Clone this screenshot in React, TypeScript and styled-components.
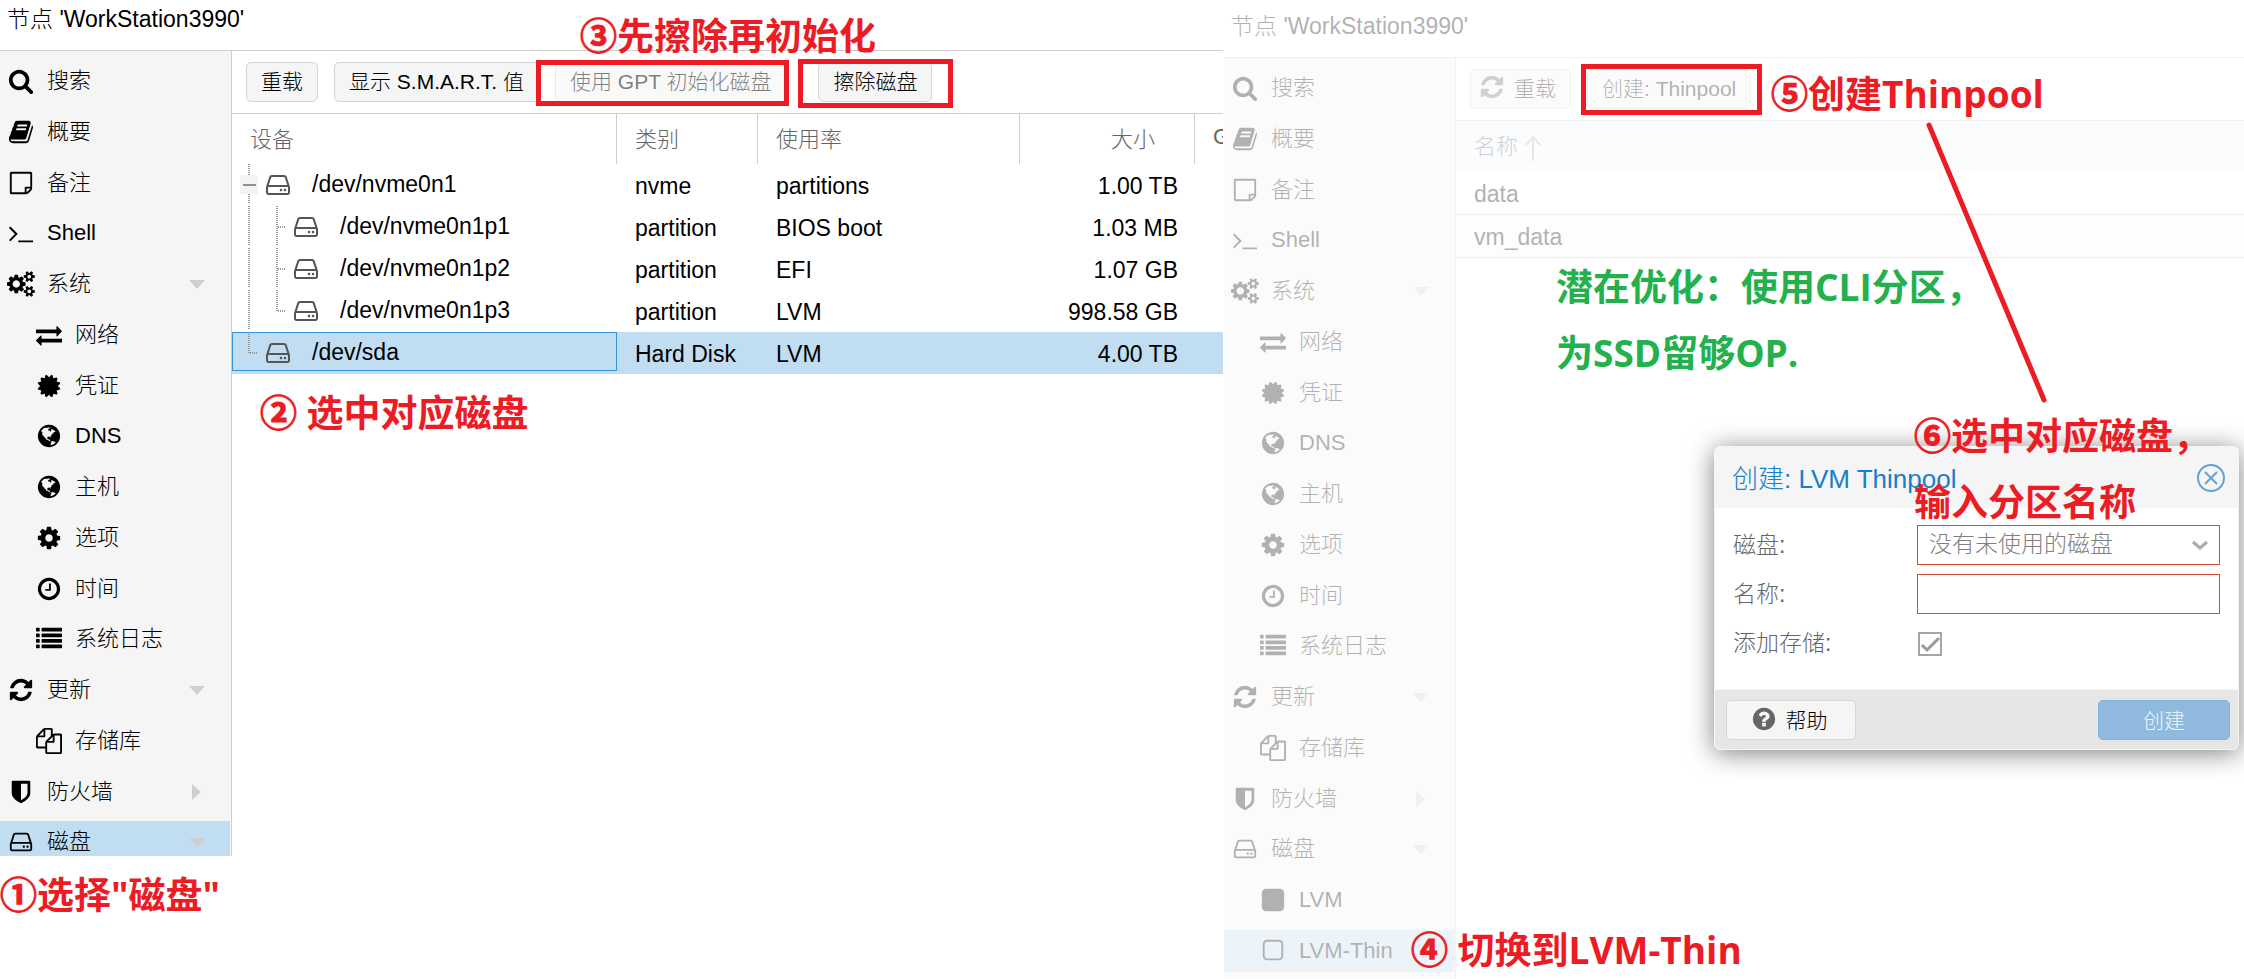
import React from 'react';
import styled, { createGlobalStyle, css } from 'styled-components';

const GlobalStyle = createGlobalStyle`
  *, *::before, *::after { box-sizing: border-box; }
  html, body { margin: 0; background: #fff; }
  body {
    font-family: 'Liberation Sans', 'Noto Sans CJK SC', sans-serif;
    font-weight: 300;
    font-size: 22px;
    color: #000;
  }
  button, input, select { font: inherit; color: inherit; margin: 0; }
`;

/* ---------- icons ---------- */

const globePath =
  'M896 128q209 0 385.5 103t279.5 279.5 103 385.5-103 385.5-279.5 279.5-385.5 103-385.5-103-279.5-279.5-103-385.5 103-385.5 279.5-279.5 385.5-103zm274 521q-2 1-9.5 9.5t-13.5 9.5q2 0 4.5-5t5-11 3.5-7q6-7 22-15 14-6 52-12 34-8 51 11-2-2 9.5-13t14.5-12q3-2 15-4.5t15-7.5l2-22q-12 1-17.5-7t-6.5-21q0 2-6 8 0-7-4.5-8t-11.5 1-9 1q-10-3-15-7.5t-8-16.5-4-15q-2-5-9.5-11t-9.5-10q-1-2-2.5-5.5t-3-6.5-4-5.5-5.5-2.5-7 5-7.5 10-4.5 5q-3-2-6-1.5t-4.5 1-4.5 3-5 3.5q-3 2-8.5 3t-8.5 2q15-5-1-11-10-4-16-3 9-4 7.5-12t-8.5-14h5q-1-4-8.5-8.5t-17.5-8.5-13-6q-8-5-34-9.5t-33-.5q-5 6-4.5 10.5t4 14 3.5 12.5q1 6-5.5 13t-6.5 12q0 7 14 15.5t10 21.5q-3 8-16 16t-16 12q-5 8-1.5 18.5t10.5 16.5q2 2 1.5 4t-3.5 4.5-5.5 4-6.5 3.5l-3 2q-11 5-20.5-6t-13.5-26q-7-25-16-30-23-8-29 1-5-13-41-26-25-9-58-4 6-1 0-15-7-15-19-12 3-6 4-17.5t1-13.5q3-13 12-23 1-1 7-8.5t9.5-13.5.5-6q35 4 50-11 5-5 11.5-17t10.5-17q9-6 14-5.5t14.5 5.5 14.5 5q14 1 15.5-11t-7.5-20q12 1 3-17-4-7-8-9-12-4-27 5-8 4 2 8-1-1-9.5 10.5t-16.5 17.5-16-5q-1-1-5.5-13.5t-9.5-13.5q-8 0-16 15 3-8-11-15t-24-8q19-12-8-27-7-4-20.5-5t-19.5 4q-5 7-5.5 11.5t5 8 10.5 5.5 11.5 4 8.5 3q14 10 8 14-2 1-8.5 3.5t-11.5 4.5-6 4q-3 4 0 14t-2 14q-5-5-9-17.5t-7-16.5q7 9-25 6l-10-1q-4 0-16 2t-20.5 1-13.5-8q-4-8 0-20 1-4 4-2-4-3-11-9.5t-10-8.5q-46 15-94 41 6 1 12-1 5-2 13-6.5t10-5.5q34-14 42-7l5-5q14 16 20 25-7-4-30-1-20 6-22 12 7 12 5 18-4-3-11.5-10t-14.5-11-15-5q-16 0-22 1-146 80-235 222 7 7 12 8 4 1 5 9t2.5 11 11.5-3q9 8 3 19 1-1 44 27 19 17 21 21 3 11-10 18-1-2-9-9t-9-4q-3 5 .5 18.5t10.5 12.5q-7 0-9.5 16t-2.5 35.5-1 23.5l2 1q-3 12 5.5 34.5t21.5 19.5q-13 3 20 43 6 8 8 9 3 2 12 7.5t15 10 10 10.5q4 5 10 22.5t14 23.5q-2 6 9.5 20t10.5 23q-1 0-2.5 1t-2.5 1q3 7 15.5 14t15.5 13q1 3 2 10t3 11 8 2q2-20-24-62-15-25-17-29-3-5-5.5-15.5t-4.5-14.5q2 0 6 1.5t8.5 3.5 7.5 4 2 3q-3 7 2 17.5t12 18.5 17 19 12 13q6 6 14 19.5t0 13.5q9 0 20 10.5t17 19.5q5 8 8 26t5 24q2 7 8.5 13.5t12.5 9.5l16 8 13 7q5 2 18.5 10.5t21.5 11.5q10 4 16 4t14.5-2.5 13.5-3.5q15-2 29 15t21 21q36 19 55 11-2 1 .5 7.5t8 15.5 9 14.5 5.5 8.5q5 6 18 15t18 15q6-4 7-9-3 8 7 20t18 10q14-3 14-32-31 15-49-18 0-1-2.5-5.5t-4-8.5-2.5-8.5 0-7.5 5-3q9 0 10-3.5t-2-12.5-4-13q-1-8-11-20t-12-15q-5 9-16 8t-16-9q0 1-1.5 5.5t-1.5 6.5q-13 0-15-1 1-3 2.5-17.5t3.5-22.5q1-4 5.5-12t7.5-14.5 4-12.5-4.5-9.5-17.5-2.5q-19 1-26 20-1 3-3 10.5t-5 11.5-9 7q-7 3-24 2t-24-5q-13-8-22.5-29t-9.5-37q0-10 2.5-26.5t3-25-5.5-24.5q3-2 9-9.5t10-10.5q2-1 4.5-1.5t4.5 0 4-1.5 3-6q-1-1-4-3-3-3-4-3 7 3 28.5-1.5t27.5 1.5q15 11 22-2 0-1-2.5-9.5t-.5-13.5q5 27 29 9 3 3 15.5 5t17.5 5q3 2 7 5.5t5.5 4.5 5-.5 8.5-6.5q10 14 12 24 11 40 19 44 7 3 11 2t4.5-9.5 0-14-1.5-12.5l-1-8v-18l-1-8q-15-3-18.5-12t1.5-18.5 15-18.5q1-1 8-3.5t15.5-6.5 12.5-8q21-19 15-35 7 0 11-9-1 0-5-3t-7.5-5-4.5-2q9-5 2-16 5-3 7.5-11t7.5-10q9 12 21 2 8-8 1-16 5-7 20.5-10.5t18.5-9.5q7 2 8-2t1-12 3-12q4-5 15-9t13-5l17-11q3-4 0-4 18 2 31-11 10-11-6-20 3-6-3-9.5t-15-5.5q3-1 11.5-.5t10.5-1.5q15-10-7-16-17-5-43 12zm-163 877q206-36 351-189-3-3-12.5-4.5t-12.5-3.5q-18-7-24-8 1-7-2.5-13t-8-9-12.5-8-11-7q-2-2-7-6t-7-5.5-7.5-4.5-8.5-2-10 1l-3 1q-3 1-5.5 2.5t-5.5 3-4 3 0 2.5q-21-17-36-22-5-1-11-5.5t-10.5-7-10-1.5-11.5 7q-5 5-6 15t-2 13q-7-5 0-17.5t2-18.5q-3-6-10.5-4.5t-12 4.5-11.5 8.5-9 6.5-8.5 5.5-8.5 7.5q-3 4-6 12t-5 11q-2-4-11.5-6.5t-9.5-5.5q2 10 4 35t5 38q7 31-12 48-27 25-29 40-4 22 12 26 0 7-8 20.5t-7 21.5q0 6 2 16z';

const paths = {
  search:
    'M1216 832q0-185-131.5-316.5t-316.5-131.5-316.5 131.5-131.5 316.5 131.5 316.5 316.5 131.5 316.5-131.5 131.5-316.5zm512 832q0 52-38 90t-90 38q-54 0-90-38l-343-342q-179 124-399 124-143 0-273.5-55.5t-225-150-150-225-55.5-273.5 55.5-273.5 150-225 225-150 273.5-55.5 273.5 55.5 225 150 150 225 55.5 273.5q0 220-124 399l343 343q37 37 37 90z',
  book:
    'M1703 478q40 57 18 129l-275 906q-19 64-76.5 107.5t-122.5 43.5h-923q-77 0-148.5-53.5t-99.5-131.5q-24-67-2-127 0-4 3-27t4-37q1-8-3-21.5t-3-19.5q2-11 8-21t16.5-23.5 16.5-23.5q23-38 45-91.5t30-91.5q3-10 .5-30t-.5-28q3-11 17-28t17-23q21-36 42-92t25-90q1-9-2.5-32t.5-28q4-13 22-30.5t22-22.5q19-26 42.5-84.5t27.5-96.5q1-8-3-25.5t-2-26.5q2-8 9-18t18-23 17-21q8-12 16.5-30.5t15-35 16-36 19.5-32 26.5-23.5 36-11.5 47.5 5.5l-1 3q38-9 51-9h761q74 0 114 56t18 130l-274 906q-36 119-71.5 153.5t-128.5 34.5h-869q-27 0-38 15-11 16-1 43 24 70 144 70h923q29 0 56-15.5t35-41.5l300-987q7-22 5-57 38 15 59 43zm-1064 2q-4 13 2 22.5t20 9.5h608q13 0 25.5-9.5t16.5-22.5l21-64q4-13-2-22.5t-20-9.5h-608q-13 0-25.5 9.5t-16.5 22.5zm-83 256q-4 13 2 22.5t20 9.5h608q13 0 25.5-9.5t16.5-22.5l21-64q4-13-2-22.5t-20-9.5h-608q-13 0-25.5 9.5t-16.5 22.5z',
  note:
    'M1528 1280h-248v248q29-10 41-22l185-185q12-12 22-41zm-280-128h288v-896h-1280v1280h896v-288q0-40 28-68t68-28zm416-928v1024q0 40-20 88t-48 76l-184 184q-28 28-76 48t-88 20h-1024q-40 0-68-28t-28-68v-1344q0-40 28-68t68-28h1344q40 0 68 28t28 68z',
  terminal:
    'M649 983l-466 466q-10 10-23 10t-23-10l-50-50q-10-10-10-23t10-23l393-393-393-393q-10-10-10-23t10-23l50-50q10-10 23-10t23 10l466 466q10 10 10 23t-10 23zm1079 457v64q0 14-9 23t-23 9h-960q-14 0-23-9t-9-23v-64q0-14 9-23t23-9h960q14 0 23 9t9 23z',
  cogs:
    'M832 896q0-106-75-181t-181-75-181 75-75 181 75 181 181 75 181-75 75-181zm768 512q0-52-38-90t-90-38-90 38-38 90q0 53 37.5 90.5t90.5 37.5 90.5-37.5 37.5-90.5zm0-1024q0-52-38-90t-90-38-90 38-38 90q0 53 37.5 90.5t90.5 37.5 90.5-37.5 37.5-90.5zm-384 421v185q0 10-7 19.5t-16 10.5l-155 24q-11 35-32 76 34 48 90 115 7 11 7 20 0 12-7 19-23 30-82.5 89.5t-78.5 59.5q-11 0-21-7l-115-90q-37 19-77 31-11 108-23 155-7 24-30 24h-186q-11 0-20-7.5t-10-17.5l-23-153q-34-10-75-31l-118 89q-7 7-20 7-11 0-21-8-144-133-144-160 0-9 7-19 10-14 41-53t47-61q-23-44-35-82l-152-24q-10-1-17-9.5t-7-19.5v-185q0-10 7-19.5t16-10.5l155-24q11-35 32-76-34-48-90-115-7-11-7-20 0-12 7-20 22-30 82-89t79-59q11 0 21 7l115 90q34-18 77-32 11-108 23-154 7-24 30-24h186q11 0 20 7.5t10 17.5l23 153q34 10 75 31l118-89q8-7 20-7 11 0 21 8 144 133 144 160 0 8-7 19-12 16-42 54t-45 60q23 48 34 82l152 23q10 2 17 10.5t7 19.5zm640 533v140q0 16-149 31-12 27-30 52 51 113 51 138 0 4-4 7-122 71-124 71-8 0-46-47t-52-68q-20 2-30 2t-30-2q-14 21-52 68t-46 47q-2 0-124-71-4-3-4-7 0-25 51-138-18-25-30-52-149-15-149-31v-140q0-16 149-31 13-29 30-52-51-113-51-138 0-4 4-7 4-2 35-20t59-34 30-16q8 0 46 46.5t52 67.5q20-2 30-2t30 2q51-71 92-112l6-2q4 0 124 70 4 3 4 7 0 25-51 138 17 23 30 52 149 15 149 31zm0-1024v140q0 16-149 31-12 27-30 52 51 113 51 138 0 4-4 7-122 71-124 71-8 0-46-47t-52-68q-20 2-30 2t-30-2q-14 21-52 68t-46 47q-2 0-124-71-4-3-4-7 0-25 51-138-18-25-30-52-149-15-149-31v-140q0-16 149-31 13-29 30-52-51-113-51-138 0-4 4-7 4-2 35-20t59-34 30-16q8 0 46 46.5t52 67.5q20-2 30-2t30 2q51-71 92-112l6-2q4 0 124 70 4 3 4 7 0 25-51 138 17 23 30 52 149 15 149 31z',
  exchange:
    'M1792 1184v192q0 13-9.5 22.5t-22.5 9.5h-1376v192q0 13-9.5 22.5t-22.5 9.5q-12 0-24-10l-319-320q-9-9-9-22 0-14 9-23l320-320q9-9 23-9 13 0 22.5 9.5t9.5 22.5v192h1376q13 0 22.5 9.5t9.5 22.5zm0-544q0 14-9 23l-320 320q-9 9-23 9-13 0-22.5-9.5t-9.5-22.5v-192h-1376q-13 0-22.5-9.5t-9.5-22.5v-192q0-13 9.5-22.5t22.5-9.5h1376v-192q0-14 9-23t23-9q12 0 24 10l319 319q9 9 9 23z',
  certificate:
    'M1504 896l138 135q30 28 20 70-12 41-52 51l-188 48 53 186q12 41-19 70-29 31-70 19l-186-53-48 188q-10 40-51 52-12 2-19 2-31 0-51-22l-135-138-135 138q-28 30-70 20-41-11-51-52l-48-188-186 53q-41 12-70-19-31-29-19-70l53-186-188-48q-40-10-52-51-10-42 20-70l138-135-138-135q-30-28-20-70 12-41 52-51l188-48-53-186q-12-41 19-70 29-31 70-19l186 53 48-188q10-41 51-51 41-12 70 19l135 139 135-139q29-30 70-19 41 10 51 51l48 188 186-53q41-12 70 19 31 29 19 70l-53 186 188 48q40 10 52 51 10 42-20 70z',
  globe: globePath,
  cog:
    'M1152 896q0-106-75-181t-181-75-181 75-75 181 75 181 181 75 181-75 75-181zm512-109v222q0 12-8 23t-20 13l-185 28q-19 54-39 91 35 50 107 138 10 12 10 25t-9 23q-27 37-99 108t-94 71q-12 0-26-9l-138-108q-44 23-91 38-16 136-29 186-7 28-36 28h-222q-14 0-24.5-8.5t-11.5-21.5l-28-184q-49-16-90-37l-141 107q-10 9-25 9-14 0-25-11-126-114-165-168-7-10-7-23 0-12 8-23 15-21 51-66.5t54-70.5q-27-50-41-99l-183-27q-13-2-21-12.5t-8-23.5v-222q0-12 8-23t19-13l186-28q14-46 39-92-40-57-107-138-10-12-10-24 0-10 9-23 26-36 98.5-107.5t94.5-71.5q13 0 26 10l138 107q44-23 91-38 16-136 29-186 7-28 36-28h222q14 0 24.5 8.5t11.5 21.5l28 184q49 16 90 37l142-107q9-9 24-9 13 0 25 10 129 119 165 170 7 8 7 22 0 12-8 23-15 21-51 66.5t-54 70.5q26 50 41 98l183 28q13 2 21 12.5t8 23.5z',
  clock:
    'M1024 544v448q0 14-9 23t-23 9h-320q-14 0-23-9t-9-23v-64q0-14 9-23t23-9h224v-352q0-14 9-23t23-9h64q14 0 23 9t9 23zm416 352q0-148-73-273t-198-198-273-73-273 73-198 198-73 273 73 273 198 198 273 73 273-73 198-198 73-273zm224 0q0 209-103 385.5t-279.5 279.5-385.5 103-385.5-103-279.5-279.5-103-385.5 103-385.5 279.5-279.5 385.5-103 385.5 103 279.5 279.5 103 385.5z',
  list:
    'M32 128h192q32 0 32 32v192q0 32-32 32h-192q-32 0-32-32v-192q0-32 32-32zm384 0h1344q32 0 32 32v192q0 32-32 32h-1344q-32 0-32-32v-192q0-32 32-32zm-384 384h192q32 0 32 32v192q0 32-32 32h-192q-32 0-32-32v-192q0-32 32-32zm384 0h1344q32 0 32 32v192q0 32-32 32h-1344q-32 0-32-32v-192q0-32 32-32zm-384 384h192q32 0 32 32v192q0 32-32 32h-192q-32 0-32-32v-192q0-32 32-32zm384 0h1344q32 0 32 32v192q0 32-32 32h-1344q-32 0-32-32v-192q0-32 32-32zm-384 384h192q32 0 32 32v192q0 32-32 32h-192q-32 0-32-32v-192q0-32 32-32zm384 0h1344q32 0 32 32v192q0 32-32 32h-1344q-32 0-32-32v-192q0-32 32-32z',
  refresh:
    'M1639 1056q0 5-1 7-64 268-268 434.5t-478 166.5q-146 0-282.5-55t-243.5-157l-129 129q-19 19-45 19t-45-19-19-45v-448q0-26 19-45t45-19h448q26 0 45 19t19 45-19 45l-137 137q71 66 161 102t187 36q134 0 250-65t186-179q11-17 53-117 8-23 30-23h192q13 0 22.5 9.5t9.5 22.5zm25-800v448q0 26-19 45t-45 19h-448q-26 0-45-19t-19-45 19-45l138-138q-148-137-349-137-134 0-250 65t-186 179q-11 17-53 117-8 23-30 23h-199q-13 0-22.5-9.5t-9.5-22.5v-7q65-268 270-434.5t480-166.5q146 0 284 55.5t245 156.5l130-129q19-19 45-19t45 19 19 45z',
  files:
    'M1696 384q40 0 68 28t28 68v1216q0 40-28 68t-68 28h-960q-40 0-68-28t-28-68v-288h-544q-40 0-68-28t-28-68v-672q0-40 20-88t48-76l408-408q28-28 76-48t88-20h416q40 0 68 28t28 68v328q68-40 128-40h416zm-544 213l-299 299h299v-299zm-640-384l-299 299h299v-299zm196 647l316-316v-416h-384v416q0 40-28 68t-68 28h-416v640h512v-256q0-40 20-88t48-76zm956 804v-1152h-384v416q0 40-28 68t-68 28h-416v640h896z',
  shield:
    'M1344 960v-640h-448v1137q119-63 213-137 235-184 235-360zm192-768v768q0 86-33.5 170.5t-83 150-118 127.5-126.5 103-121 77.5-89.5 49.5-42.5 20q-12 6-26 6t-26-6q-16-7-42.5-20t-89.5-49.5-121-77.5-126.5-103-118-127.5-83-150-33.5-170.5v-768q0-26 19-45t45-19h1152q26 0 45 19t19 45z',
  hdd:
    'M1168 1216q0 33-23.5 56.5t-56.5 23.5-56.5-23.5-23.5-56.5 23.5-56.5 56.5-23.5 56.5 23.5 23.5 56.5zm256 0q0 33-23.5 56.5t-56.5 23.5-56.5-23.5-23.5-56.5 23.5-56.5 56.5-23.5 56.5 23.5 23.5 56.5zm112 160v-320q0-13-9.5-22.5t-22.5-9.5h-1216q-13 0-22.5 9.5t-9.5 22.5v320q0 13 9.5 22.5t22.5 9.5h1216q13 0 22.5-9.5t9.5-22.5zm-1230-480h1180l-157-482q-4-13-16-21.5t-26-8.5h-782q-14 0-26 8.5t-16 21.5zm1358 160v320q0 66-47 113t-113 47h-1216q-66 0-113-47t-47-113v-320q0-25 16-75l197-606q17-53 63-86t101-33h782q55 0 101 33t63 86l197 606q16 50 16 75z',
  square:
    'M1664 416v960q0 119-84.5 203.5t-203.5 84.5h-960q-119 0-203.5-84.5t-84.5-203.5v-960q0-119 84.5-203.5t203.5-84.5h960q119 0 203.5 84.5t84.5 203.5z',
  squareOutline:
    'M1312 256h-832q-66 0-113 47t-47 113v832q0 66 47 113t113 47h832q66 0 113-47t47-113v-832q0-66-47-113t-113-47zm288 160v832q0 119-84.5 203.5t-203.5 84.5h-832q-119 0-203.5-84.5t-84.5-203.5v-832q0-119 84.5-203.5t203.5-84.5h832q119 0 203.5 84.5t84.5 203.5z',
  question:
    'M1024 1376v-192q0-14-9-23t-23-9h-192q-14 0-23 9t-9 23v192q0 14 9 23t23 9h192q14 0 23-9t9-23zm256-672q0-88-55.5-163t-138.5-116-170-41q-243 0-371 213-15 24 8 42l132 100q7 6 19 6 16 0 25-12 53-68 86-92 34-24 86-24 48 0 85.5 26t37.5 59q0 38-20 61t-68 45q-63 28-115.5 86.5t-52.5 125.5v36q0 14 9 23t23 9h192q14 0 23-9t9-23q0-19 21.5-49.5t54.5-49.5q32-18 49-28.5t46-35 44.5-48 28-60.5 12.5-81zm384 192q0 209-103 385.5t-279.5 279.5-385.5 103-385.5-103-279.5-279.5-103-385.5 103-385.5 279.5-279.5 385.5-103 385.5 103 279.5 279.5 103 385.5z',
};

type IconName = keyof typeof paths;

const Glyph = styled.svg<{ $size: number }>`
  flex: none;
  height: ${(p) => p.$size}px;
  fill: currentColor;
`;

function Icon({ name, size = 26 }: { name: IconName; size?: number }) {
  const box = name === 'cogs' ? '-64 0 1920 1792' : '0 0 1792 1792';
  return (
    <Glyph $size={size} viewBox={box} aria-hidden="true">
      <path d={paths[name]} />
    </Glyph>
  );
}

/* ---------- page frame ---------- */

const Page = styled.main`
  display: flex;
  gap: 1px;
  min-height: 100vh;
  overflow: hidden;
`;

const Panel = styled.section<{ $grow: number }>`
  position: relative;
  flex: ${(p) => p.$grow} 1 0;
  min-width: 0;
`;

const Masked = styled.div`
  opacity: 0.3;
`;

const Title = styled.h1<{ $height: number; $lift: number }>`
  margin: 0;
  height: ${(p) => p.$height}px;
  padding: ${(p) => p.$lift}px 7px 0;
  border-bottom: 1px solid #cfcfcf;
  font-size: 23px;
  font-weight: 300;
  line-height: 28px;
  white-space: nowrap;
`;

const Body = styled.div`
  display: flex;
`;

/* ---------- navigation ---------- */

const Nav = styled.nav<{ $clip?: boolean }>`
  flex: none;
  width: 232px;
  padding-top: 9px;
  background: #f5f5f5;
  border-right: 1px solid #cfcfcf;
  ${(p) =>
    p.$clip &&
    css`
      height: 805px;
      overflow: hidden;
    `}
`;

const NavList = styled.ul`
  margin: 0;
  padding: 0;
  list-style: none;
`;

const NavRow = styled.li<{ $tight?: boolean }>`
  padding-bottom: ${(p) => (p.$tight ? 8 : 9)}px;

  &:last-child {
    padding-bottom: 7px;
  }
`;

const NavLink = styled.a<{ $child?: boolean; $active?: boolean }>`
  display: flex;
  align-items: center;
  height: 42px;
  margin-right: 1px;
  padding-left: ${(p) => (p.$child ? 28 : 0)}px;
  padding-right: 25px;
  background: ${(p) => (p.$active ? '#c1ddf1' : 'transparent')};
  color: #000;
  line-height: 42px;
  text-decoration: none;
  white-space: nowrap;
`;

const NavIcon = styled.span`
  display: flex;
  justify-content: center;
  width: 42px;
  margin-right: 5px;
`;

const Arrow = styled.span<{ $open: boolean }>`
  margin-left: auto;
  border: solid transparent;
  ${(p) =>
    p.$open
      ? css`
          border-width: 9px 8px 0;
          border-top-color: #cfcfcf;
        `
      : css`
          margin-right: 4px;
          border-width: 8px 0 8px 9px;
          border-left-color: #cfcfcf;
        `}
`;

type NavItem = {
  icon: IconName;
  label: string;
  child?: boolean;
  arrow?: 'open' | 'closed';
  tight?: boolean;
};

const nodeItems: NavItem[] = [
  { icon: 'search', label: '搜索' },
  { icon: 'book', label: '概要' },
  { icon: 'note', label: '备注', tight: true },
  { icon: 'terminal', label: 'Shell' },
  { icon: 'cogs', label: '系统', arrow: 'open' },
  { icon: 'exchange', label: '网络', child: true },
  { icon: 'certificate', label: '凭证', child: true, tight: true },
  { icon: 'globe', label: 'DNS', child: true },
  { icon: 'globe', label: '主机', child: true },
  { icon: 'cog', label: '选项', child: true },
  { icon: 'clock', label: '时间', child: true, tight: true },
  { icon: 'list', label: '系统日志', child: true },
  { icon: 'refresh', label: '更新', arrow: 'open' },
  { icon: 'files', label: '存储库', child: true },
  { icon: 'shield', label: '防火墙', arrow: 'closed', tight: true },
  { icon: 'hdd', label: '磁盘', arrow: 'open' },
];

const thinItems: NavItem[] = [
  ...nodeItems,
  { icon: 'square', label: 'LVM', child: true },
  { icon: 'squareOutline', label: 'LVM-Thin', child: true },
];

function Sidebar({ items, active, clip }: { items: NavItem[]; active: string; clip?: boolean }) {
  return (
    <Nav $clip={clip}>
      <NavList>
        {items.map((it) => (
          <NavRow key={it.label} $tight={it.tight}>
            <NavLink href="#" $child={it.child} $active={it.label === active}>
              <NavIcon>
                <Icon name={it.icon} />
              </NavIcon>
              {it.label}
              {it.arrow && <Arrow $open={it.arrow === 'open'} />}
            </NavLink>
          </NavRow>
        ))}
      </NavList>
    </Nav>
  );
}

/* ---------- toolbar ---------- */

const Content = styled.div`
  flex: 1;
  min-width: 0;
`;

const Toolbar = styled.div`
  display: flex;
  align-items: flex-start;
  gap: 16px;
  height: 63px;
  padding: 11px 14px 0;
  border-bottom: 1px solid #cfcfcf;
`;

const Button = styled.button<{ $icon?: boolean }>`
  display: flex;
  align-items: center;
  gap: 9px;
  height: 40px;
  padding: 0 14px 4px ${(p) => (p.$icon ? 8 : 14)}px;
  border: 1px solid #d5d5d5;
  border-radius: 5px;
  background: #f5f5f5;
  font-size: 21px;
  white-space: nowrap;

  &:disabled {
    opacity: 0.5;
  }

  svg {
    color: #666;
  }
`;

const Spacer = styled.span`
  width: 0;
`;

/* ---------- grids ---------- */

const Grid = styled.table`
  width: 100%;
  border-collapse: separate;
  border-spacing: 0;
  table-layout: fixed;
  font-size: 23px;
  text-align: left;
`;

const HeadCell = styled.th<{ $width?: number; $right?: boolean; $sorted?: boolean }>`
  width: ${(p) => (p.$width ? `${p.$width}px` : 'auto')};
  height: ${(p) => (p.$sorted ? 51 : 50)}px;
  padding: 0 ${(p) => (p.$right ? 39 : 0)}px 4px 18px;
  border-right: ${(p) => (p.$sorted ? 0 : 1)}px solid #cfcfcf;
  background: ${(p) => (p.$sorted ? '#f0f6fc' : 'transparent')};
  color: #666;
  font-size: 22px;
  font-weight: 300;
  text-align: ${(p) => (p.$right ? 'right' : 'left')};
  white-space: nowrap;
  overflow: hidden;

  &:last-child {
    border-right: 0;
  }
`;

const Row = styled.tr<{ $selected?: boolean }>`
  background: ${(p) => (p.$selected ? '#c1ddf1' : 'transparent')};
`;

const Cell = styled.td<{ $right?: boolean }>`
  height: 42px;
  padding: 2px ${(p) => (p.$right ? 17 : 0)}px 0 18px;
  text-align: ${(p) => (p.$right ? 'right' : 'left')};
  white-space: nowrap;
`;

const TreeCell = styled.td`
  height: 42px;
  padding: 0;
  vertical-align: top;
`;

const TreeLine = styled.div<{ $selected?: boolean }>`
  position: relative;
  display: flex;
  align-items: center;
  height: 42px;
  padding-left: 3px;
  white-space: nowrap;

  ${(p) =>
    p.$selected &&
    css`
      &::after {
        content: '';
        position: absolute;
        inset: 0 0 3px;
        border: 1px solid #3892d4;
      }
    `}
`;

const Guide = styled.svg`
  flex: none;
  width: 28px;
  height: 42px;
  shape-rendering: crispEdges;
`;

const DiskIcon = styled.span`
  display: flex;
  margin: 0 20px 0 1px;
  color: #555;
`;

const TreeLabel = styled.span`
  padding-bottom: 2px;
`;

type Line = 'minus' | 'through' | 'tee' | 'elbow';

function TreeGuide({ kind }: { kind: Line }) {
  const end = kind === 'elbow' ? 21 : 39;
  return (
    <Guide viewBox="0 0 28 42" aria-hidden="true">
      <path d={`M14 0V${end}`} stroke="#999" strokeWidth="2" strokeDasharray="1 1" />
      {(kind === 'tee' || kind === 'elbow') && (
        <path d="M15 21H23" stroke="#999" strokeWidth="2" strokeDasharray="1 1" />
      )}
      {kind === 'minus' && (
        <>
          <rect x="5" y="11" width="18" height="19" fill="#f3f3f3" />
          <path d="M8 21H21" stroke="#909090" strokeWidth="2" />
        </>
      )}
    </Guide>
  );
}

const disks: { name: string; guides: Line[]; type: string; usage: string; size: string; selected?: boolean }[] = [
  { name: '/dev/nvme0n1', guides: ['minus'], type: 'nvme', usage: 'partitions', size: '1.00 TB' },
  { name: '/dev/nvme0n1p1', guides: ['through', 'tee'], type: 'partition', usage: 'BIOS boot', size: '1.03 MB' },
  { name: '/dev/nvme0n1p2', guides: ['through', 'tee'], type: 'partition', usage: 'EFI', size: '1.07 GB' },
  { name: '/dev/nvme0n1p3', guides: ['through', 'elbow'], type: 'partition', usage: 'LVM', size: '998.58 GB' },
  { name: '/dev/sda', guides: ['elbow'], type: 'Hard Disk', usage: 'LVM', size: '4.00 TB', selected: true },
];

function DiskGrid() {
  return (
    <Grid>
      <thead>
        <tr>
          <HeadCell $width={385}>设备</HeadCell>
          <HeadCell $width={141}>类别</HeadCell>
          <HeadCell>使用率</HeadCell>
          <HeadCell $width={175} $right>
            大小
          </HeadCell>
          <HeadCell $width={28}>G</HeadCell>
        </tr>
      </thead>
      <tbody>
        {disks.map((d) => (
          <Row key={d.name} $selected={d.selected}>
            <TreeCell>
              <TreeLine $selected={d.selected}>
                {d.guides.map((g, i) => (
                  <TreeGuide key={i} kind={g} />
                ))}
                <DiskIcon>
                  <Icon name="hdd" size={28} />
                </DiskIcon>
                <TreeLabel>{d.name}</TreeLabel>
              </TreeLine>
            </TreeCell>
            <Cell>{d.type}</Cell>
            <Cell>{d.usage}</Cell>
            <Cell $right>{d.size}</Cell>
            <Cell />
          </Row>
        ))}
      </tbody>
    </Grid>
  );
}

const PoolCell = styled.td<{ $alt?: boolean }>`
  height: 43px;
  padding: 2px 18px 0;
  border-bottom: 1px solid #cfcfcf;
  background: ${(p) => (p.$alt ? '#fafafa' : '#fff')};
`;

const SortArrow = styled.svg`
  width: 18px;
  height: 26px;
  margin-left: 6px;
  vertical-align: middle;
  fill: none;
  stroke: #b5b5b5;
  stroke-width: 2;
`;

/* ---------- dialog ---------- */

const Dialog = styled.div`
  position: absolute;
  top: 446px;
  right: 5px;
  width: 525px;
  border: 1px solid #f5f5f5;
  border-radius: 6px;
  background: #fff;
  box-shadow: 0 3px 26px rgba(0, 0, 0, 0.5);
  color: #666;
  font-size: 23px;
  overflow: hidden;
`;

const DialogHead = styled.header`
  display: flex;
  align-items: center;
  justify-content: space-between;
  height: 61px;
  padding: 0 12px 0 17px;
  background: #f5f5f5;
`;

const DialogTitle = styled.h2`
  margin: 0;
  padding-bottom: 2px;
  color: #157fcc;
  font-size: 26px;
  font-weight: 300;
`;

const CloseButton = styled.button`
  display: flex;
  padding: 0;
  border: 0;
  background: none;
`;

const Form = styled.div`
  display: grid;
  grid-template-columns: 184px 1fr;
  row-gap: 9px;
  align-items: center;
  height: 181px;
  align-content: start;
  padding: 17px 18px 0;
`;

const FieldLabel = styled.label`
  height: 40px;
  line-height: 40px;
`;

const SelectWrap = styled.div`
  position: relative;

  svg {
    position: absolute;
    top: 15px;
    right: 12px;
    pointer-events: none;
  }
`;

const fieldBox = css`
  display: block;
  width: 100%;
  height: 40px;
  padding: 0 11px 2px;
  border: 1px solid #cf4c35;
  border-radius: 0;
  background: #fff;
  color: #808080;
`;

const Select = styled.select`
  ${fieldBox}
  appearance: none;
`;

const TextInput = styled.input`
  ${fieldBox}
`;

const Check = styled.input`
  appearance: none;
  width: 24px;
  height: 24px;
  margin: 2px 0 0 1px;
  border: 2px solid #a5a5a5;
  background: #fff
    url("data:image/svg+xml,%3Csvg xmlns='http://www.w3.org/2000/svg' viewBox='0 0 20 20'%3E%3Cpath d='M2 11l5 5L19 4' fill='none' stroke='%23999' stroke-width='3'/%3E%3C/svg%3E");
`;

const DialogFoot = styled.footer`
  display: flex;
  justify-content: space-between;
  height: 60px;
  padding: 10px 8px 0 11px;
  border-top: 1px solid #f5f5f5;
  background: #e6e6e6;
`;

const DialogButton = styled(Button)<{ $primary?: boolean }>`
  justify-content: center;
  width: ${(p) => (p.$primary ? 132 : 130)}px;
  padding: 0 ${(p) => (p.$primary ? 14 : 18)}px 2px 14px;
  border-color: ${(p) => (p.$primary ? '#7fb4dc' : '#d5d5d5')};
  background: ${(p) => (p.$primary ? '#8fbadd' : '#f5f5f5')};
  color: ${(p) => (p.$primary ? '#eef5fb' : '#000')};

  &:disabled {
    opacity: 1;
  }
`;

function ThinpoolDialog() {
  return (
    <Dialog role="dialog" aria-labelledby="dialog-title">
      <DialogHead>
        <DialogTitle id="dialog-title">创建: LVM Thinpool</DialogTitle>
        <CloseButton type="button" aria-label="关闭">
          <svg width="30" height="30" viewBox="0 0 30 30" fill="none" stroke="#64a2d4" strokeWidth="2">
            <circle cx="15" cy="15" r="13" />
            <path d="M9 9l12 12M21 9L9 21" />
          </svg>
        </CloseButton>
      </DialogHead>
      <Form>
        <FieldLabel htmlFor="disk">磁盘:</FieldLabel>
        <SelectWrap>
          <Select id="disk">
            <option>没有未使用的磁盘</option>
          </Select>
          <svg width="16" height="12" viewBox="0 0 16 12" fill="none" stroke="#aaa" strokeWidth="3">
            <path d="M1 2l7 6 7-6" />
          </svg>
        </SelectWrap>
        <FieldLabel htmlFor="name">名称:</FieldLabel>
        <TextInput id="name" type="text" />
        <FieldLabel htmlFor="storage">添加存储:</FieldLabel>
        <Check id="storage" type="checkbox" defaultChecked />
      </Form>
      <DialogFoot>
        <DialogButton type="button">
          <Icon name="question" />
          帮助
        </DialogButton>
        <DialogButton type="button" $primary disabled>
          创建
        </DialogButton>
      </DialogFoot>
    </Dialog>
  );
}

/* ---------- annotations drawn over the panels ---------- */

const Note = styled.p<{ $x: number; $y: number; $green?: boolean }>`
  position: absolute;
  left: ${(p) => p.$x}px;
  top: ${(p) => p.$y}px;
  margin: 0;
  color: ${(p) => (p.$green ? '#22b14c' : '#ed1c24')};
  font-family: 'Open Sans', 'Noto Sans CJK SC', sans-serif;
  font-size: 37px;
  font-weight: 700;
  line-height: 66px;
  white-space: pre;
`;

const Step = styled.span`
  -webkit-text-stroke: 1px currentColor;
`;

const Frame = styled.div<{ $x: number; $y: number; $w: number; $h: number }>`
  position: absolute;
  left: ${(p) => p.$x}px;
  top: ${(p) => p.$y}px;
  width: ${(p) => p.$w}px;
  height: ${(p) => p.$h}px;
  border: 5px solid #ed1c24;
  pointer-events: none;
`;

const Pointer = styled.svg`
  position: absolute;
  left: 700px;
  top: 120px;
  width: 124px;
  height: 286px;
  pointer-events: none;
`;

export default function App() {
  return (
    <>
      <GlobalStyle />
      <Page>
        <Panel $grow={1223}>
          <Title $height={51} $lift={5}>
            节点 'WorkStation3990'
          </Title>
          <Body>
            <Sidebar items={nodeItems} active="磁盘" clip />
            <Content>
              <Toolbar>
                <Button type="button">重载</Button>
                <Button type="button">显示 S.M.A.R.T. 值</Button>
                <Button type="button" disabled>
                  使用 GPT 初始化磁盘
                </Button>
                <Spacer />
                <Button type="button">擦除磁盘</Button>
              </Toolbar>
              <DiskGrid />
            </Content>
          </Body>
          <Frame $x={536} $y={60} $w={253} $h={46} />
          <Frame $x={798} $y={59} $w={155} $h={49} />
          <Note $x={0} $y={862}>
            <Step>①</Step>选择"磁盘"
          </Note>
          <Note $x={260} $y={380}>
            <Step>②</Step> 选中对应磁盘
          </Note>
          <Note $x={580} $y={3}>
            <Step>③</Step>先擦除再初始化
          </Note>
        </Panel>
        <Panel $grow={1020}>
          <Masked>
            <Title as="h2" $height={58} $lift={12}>
              节点 'WorkStation3990'
            </Title>
            <Body>
              <Sidebar items={thinItems} active="LVM-Thin" />
              <Content>
                <Toolbar>
                  <Button type="button" $icon>
                    <Icon name="refresh" />
                    重载
                  </Button>
                  <Button type="button">创建: Thinpool</Button>
                </Toolbar>
                <Grid>
                  <thead>
                    <tr>
                      <HeadCell $sorted>
                        名称
                        <SortArrow viewBox="0 0 18 26" aria-hidden="true">
                          <path d="M9 26V2M2 10l7-8 7 8" />
                        </SortArrow>
                      </HeadCell>
                    </tr>
                  </thead>
                  <tbody>
                    <tr>
                      <PoolCell>data</PoolCell>
                    </tr>
                    <tr>
                      <PoolCell $alt>vm_data</PoolCell>
                    </tr>
                  </tbody>
                </Grid>
              </Content>
            </Body>
          </Masked>
          <ThinpoolDialog />
          <Frame $x={357} $y={64} $w={181} $h={51} />
          <Note $x={187} $y={917}>
            <Step>④</Step> 切换到LVM-Thin
          </Note>
          <Note $x={547} $y={61}>
            <Step>⑤</Step>创建Thinpool
          </Note>
          <Note $x={690} $y={403}>
            <Step>⑥</Step>
            {'选中对应磁盘，\n输入分区名称'}
          </Note>
          <Note $x={332} $y={254} $green>
            {'潜在优化：使用CLI分区，\n为SSD留够OP.'}
          </Note>
          <Pointer viewBox="0 0 124 286" aria-hidden="true">
            <path d="M5 5L120 280" stroke="#ed1c24" strokeWidth="5" strokeLinecap="round" />
          </Pointer>
        </Panel>
      </Page>
    </>
  );
}
